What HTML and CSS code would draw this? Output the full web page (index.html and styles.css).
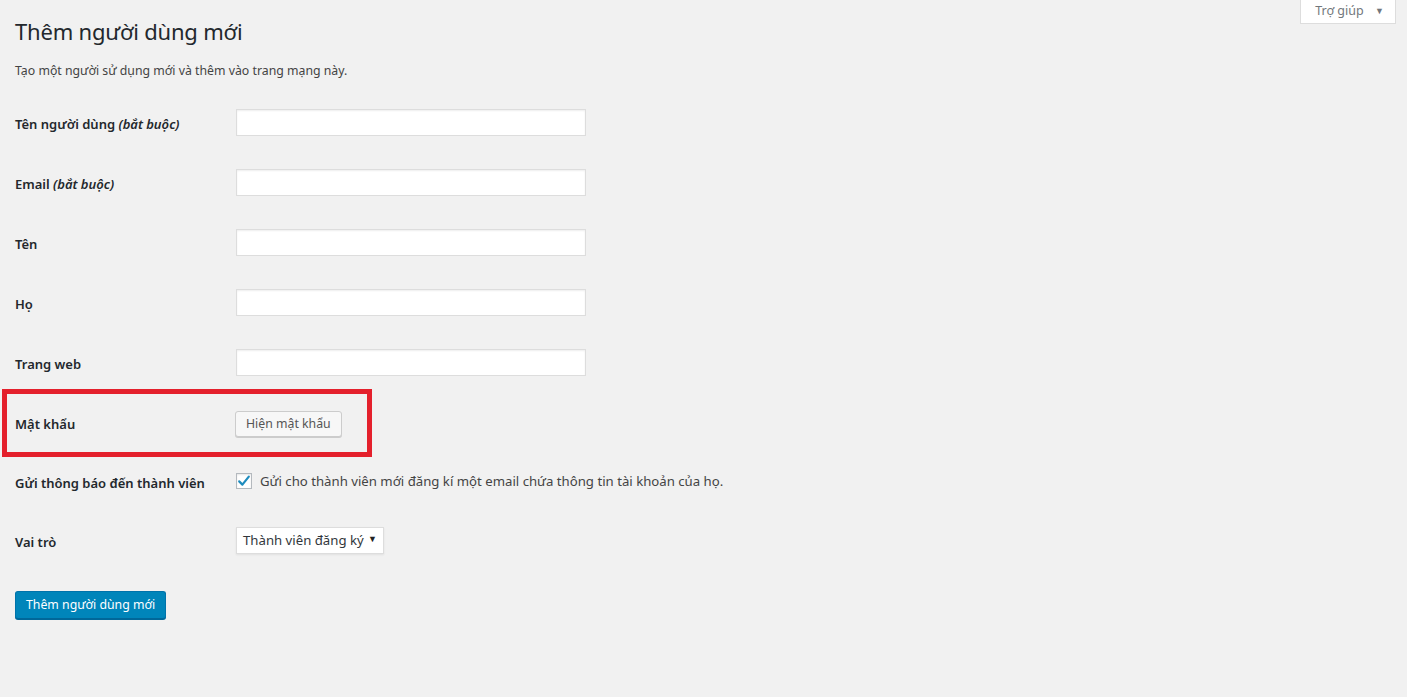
FILE: index.html
```html
<!DOCTYPE html>
<html lang="vi">
<head>
<meta charset="utf-8">
<title>Thêm người dùng mới</title>
<link rel="stylesheet" href="styles.css">
</head>
<body>
<div class="help-tab">Trợ giúp <span class="arrow">▼</span></div>
<div class="wrap">
  <h1 class="title">Thêm người dùng mới</h1>
  <p class="desc">Tạo một người sử dụng mới và thêm vào trang mạng này.</p>
  <form class="form-table">
    <div class="row">
      <label class="lbl">Tên người dùng <em>(bắt buộc)</em></label>
      <div class="field"><input class="text" type="text"></div>
    </div>
    <div class="row">
      <label class="lbl">Email <em>(bắt buộc)</em></label>
      <div class="field"><input class="text" type="text"></div>
    </div>
    <div class="row">
      <label class="lbl">Tên</label>
      <div class="field"><input class="text" type="text"></div>
    </div>
    <div class="row">
      <label class="lbl">Họ</label>
      <div class="field"><input class="text" type="text"></div>
    </div>
    <div class="row">
      <label class="lbl">Trang web</label>
      <div class="field"><input class="text" type="text"></div>
    </div>
    <div class="row row-pass">
      <div class="highlight"></div>
      <label class="lbl">Mật khẩu</label>
      <div class="field"><button type="button" class="btn-secondary">Hiện mật khẩu</button></div>
    </div>
    <div class="row row-check">
      <label class="lbl">Gửi thông báo đến thành viên</label>
      <div class="field check-field">
        <span class="checkbox"><svg width="14" height="14" viewBox="0 0 14 14"><path d="M2.2 7.4 L5.4 10.6 L11.8 2.6" fill="none" stroke="#1e8cbe" stroke-width="2.2" stroke-linecap="round" stroke-linejoin="round"/></svg></span>
        <span class="check-text">Gửi cho thành viên mới đăng kí một email chứa thông tin tài khoản của họ.</span>
      </div>
    </div>
    <div class="row">
      <label class="lbl">Vai trò</label>
      <div class="field"><div class="select">Thành viên đăng ký<span class="sel-arrow">▼</span></div></div>
    </div>
    <div class="submit-row">
      <button type="button" class="btn-primary">Thêm người dùng mới</button>
    </div>
  </form>
</div>
</body>
</html>
```

FILE: styles.css
```css
html, body {
  margin: 0;
  padding: 0;
  background: #f1f1f1;
}
body {
  font-family: "Noto Sans", "Open Sans", "Liberation Sans", sans-serif;
  color: #23282d;
  font-size: 13px;
  position: relative;
  min-height: 697px;
}
.help-tab {
  position: absolute;
  top: 0;
  left: 1300px;
  width: 96px;
  height: 24px;
  box-sizing: border-box;
  background: #fff;
  border: 1px solid #ddd;
  border-top: none;
  color: #72777c;
  font-size: 12.5px;
  line-height: 22px;
  text-align: center;
  padding-left: 3px;
}
.help-tab .arrow {
  font-size: 9px;
  margin-left: 8px;
  color: #72777c;
  vertical-align: 1px;
}
.wrap {
  padding: 0 15px;
}
.title {
  margin: 0;
  padding-top: 17px;
  font-size: 22px;
  font-weight: 400;
  line-height: 28px;
  color: #23282d;
  letter-spacing: -0.2px;
}
.desc {
  margin: 0;
  padding-top: 17px;
  font-size: 12.3px;
  line-height: 18px;
  color: #444;
}
.form-table {
  padding-top: 12px;
  display: flex;
  flex-direction: column;
}
.row {
  display: flex;
  align-items: center;
  height: 60px;
  position: relative;
}
.row-check {
  height: 58px;
}
.lbl {
  width: 221px;
  font-size: 13px;
  font-weight: 600;
  color: #23282d;
  padding-top: 3px;
}
.lbl em {
  font-weight: 600;
  font-style: italic;
}
.field {
  display: flex;
  align-items: center;
}
.text {
  width: 350px;
  height: 27px;
  box-sizing: border-box;
  border: 1px solid #ddd;
  background: #fff;
  box-shadow: inset 0 1px 2px rgba(0,0,0,0.07);
  margin: 0;
  padding: 0;
}
.highlight {
  position: absolute;
  left: -13px;
  top: -3px;
  width: 370px;
  height: 68px;
  box-sizing: border-box;
  border: 5px solid #e4202c;
  pointer-events: none;
}
.btn-secondary {
  height: 26px;
  box-sizing: border-box;
  padding: 0 10px;
  margin: 3px 0 0 -1px;
  background: #f7f7f7;
  border: 1px solid #ccc;
  border-radius: 3px;
  box-shadow: 0 1px 0 #ccc;
  color: #555;
  font-family: inherit;
  font-size: 12.3px;
  line-height: 24px;
}
.check-field {
  gap: 8px;
}
.checkbox {
  width: 16px;
  height: 16px;
  box-sizing: border-box;
  border: 1px solid #b4b9be;
  background: #fff;
  box-shadow: inset 0 1px 2px rgba(0,0,0,0.1);
  display: flex;
  align-items: center;
  justify-content: center;
}
.check-text {
  font-size: 13.2px;
  color: #444;
}
.select {
  width: 148px;
  height: 27px;
  box-sizing: border-box;
  border: 1px solid #ddd;
  background: #fff;
  box-shadow: 0 1px 2px rgba(0,0,0,0.07);
  font-size: 13.2px;
  color: #32373c;
  line-height: 25px;
  padding-left: 6px;
  display: flex;
  justify-content: space-between;
  padding-right: 6px;
}
.sel-arrow {
  font-size: 9px;
  color: #222;
  line-height: 22px;
}
.submit-row {
  padding-top: 21px;
}
.btn-primary {
  height: 28px;
  box-sizing: border-box;
  padding: 0 10px;
  margin: 0;
  background: #0085ba;
  border: 1px solid #0073aa;
  border-bottom-color: #006799;
  border-radius: 3px;
  box-shadow: 0 1px 0 #006799;
  color: #fff;
  font-family: inherit;
  font-size: 12.3px;
  line-height: 26px;
}
```
